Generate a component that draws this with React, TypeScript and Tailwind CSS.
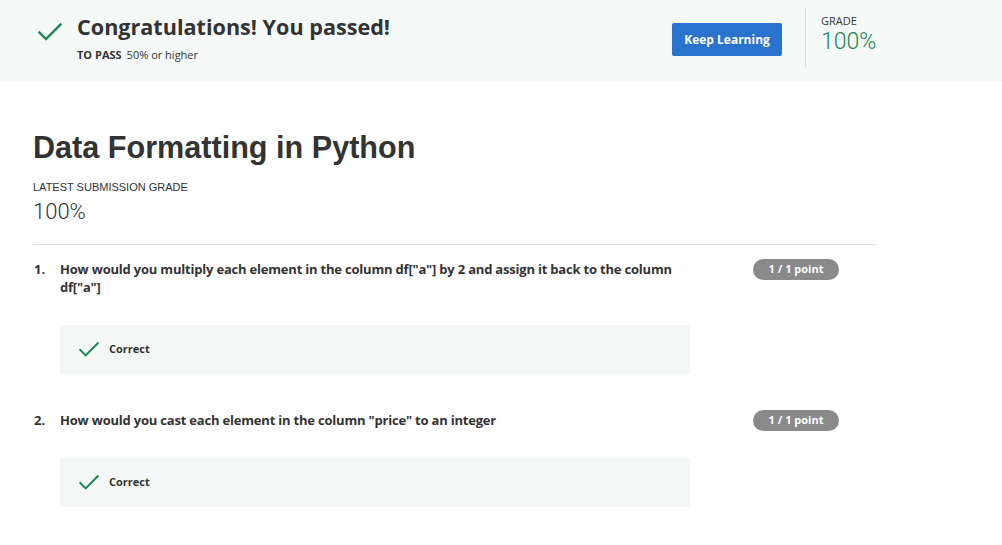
import React from "react";

function Check({ className }: { className?: string }) {
  return (
    <svg viewBox="0 0 24 18" className={className} fill="none">
      <path d="M1.5 9.5 L8 16 L22.5 1.5" stroke="#1f8354" strokeWidth="2.4" strokeLinecap="square" />
    </svg>
  );
}

function Question({ n, text, pt }: { n: number; text: React.ReactNode; pt: string }) {
  return (
    <div className={pt}>
      <div className="flex items-start">
        <div className="w-[27px] pl-[1px] text-[13px] font-bold leading-[18px] text-[#333]">{n}.</div>
        <div className="w-[640px] text-[13px] font-bold leading-[18px] text-[#333] tracking-[-0.2px]">{text}</div>
        <div className="ml-[53px] mt-[-1px] h-[21px] w-[86px] shrink-0 rounded-full bg-[#8a8a8a] text-white text-[11px] font-bold flex items-center justify-center">
          1 / 1 point
        </div>
      </div>
    </div>
  );
}

function Correct({ mt }: { mt: string }) {
  return (
    <div className={`${mt} ml-[27px] w-[630px] h-[49px] bg-[#f3f8f6] flex items-center pl-[19px]`}>
      <Check className="w-[20px] h-[15px]" />
      <span className="ml-[10px] text-[11px] font-bold text-[#333]">Correct</span>
    </div>
  );
}

export default function App() {
  return (
    <div className="w-[1002px] h-[545px] bg-white overflow-hidden" style={{ fontFamily: '"Open Sans", sans-serif' }}>
      <div className="h-[81px] bg-[#f5faf8] flex">
        <div className="pl-[38px] pt-[23px]">
          <Check className="w-[24px] h-[18px]" />
        </div>
        <div className="pl-[15px] pt-[11px]">
          <div className="text-[21.6px] font-bold leading-[32px] text-[#333]">Congratulations! You passed!</div>
          <div className="mt-[4px] text-[11px] leading-[15px] text-[#333]">
            <span className="font-bold">TO PASS</span>
            <span className="ml-[5px]">50% or higher</span>
          </div>
        </div>
        <div className="ml-auto pt-[23px]">
          <button className="w-[110px] h-[33px] rounded-[2px] bg-[#2a73cc] text-white text-[12px] font-bold">Keep Learning</button>
        </div>
        <div className="ml-[23px] mt-[7px] w-px h-[61px] bg-[#dcdcdc]" />
        <div className="ml-[15px] pt-[13px] w-[181px]">
          <div className="text-[11px] leading-[16px] text-[#333]">GRADE</div>
          <div className="text-[23px] leading-[26px] text-[#1f8354]" style={{ fontFamily: "Roboto, sans-serif", fontWeight: 300 }}>100%</div>
        </div>
      </div>

      <div className="pl-[33px] w-[876px]">
        <h1 className="mt-[47px] text-[30.6px] font-bold leading-[38px] text-[#333]" style={{ fontFamily: '"Liberation Sans", Arial, sans-serif' }}>
          Data Formatting in Python
        </h1>
        <div className="mt-[14px] text-[11px] leading-[14px] text-[#333]" style={{ fontFamily: '"Liberation Sans", Arial, sans-serif' }}>
          LATEST SUBMISSION GRADE
        </div>
        <div className="mt-[5px] text-[22px] leading-[26px] text-[#333]" style={{ fontFamily: "Roboto, sans-serif", fontWeight: 300 }}>
          100%
        </div>
        <div className="mt-[19px] h-px w-[843px] bg-[#dcdcdc]" />

        <Question
          n={1}
          pt="pt-[15px]"
          text={<>How would you multiply each element in the column df["a"] by 2 and assign it back to the column df["a"]</>}
        />
        <Correct mt="mt-[29px]" />

        <Question n={2} pt="pt-[37px]" text={<>How would you cast each element in the column "price" to an integer</>} />
        <Correct mt="mt-[27px]" />
      </div>
    </div>
  );
}
